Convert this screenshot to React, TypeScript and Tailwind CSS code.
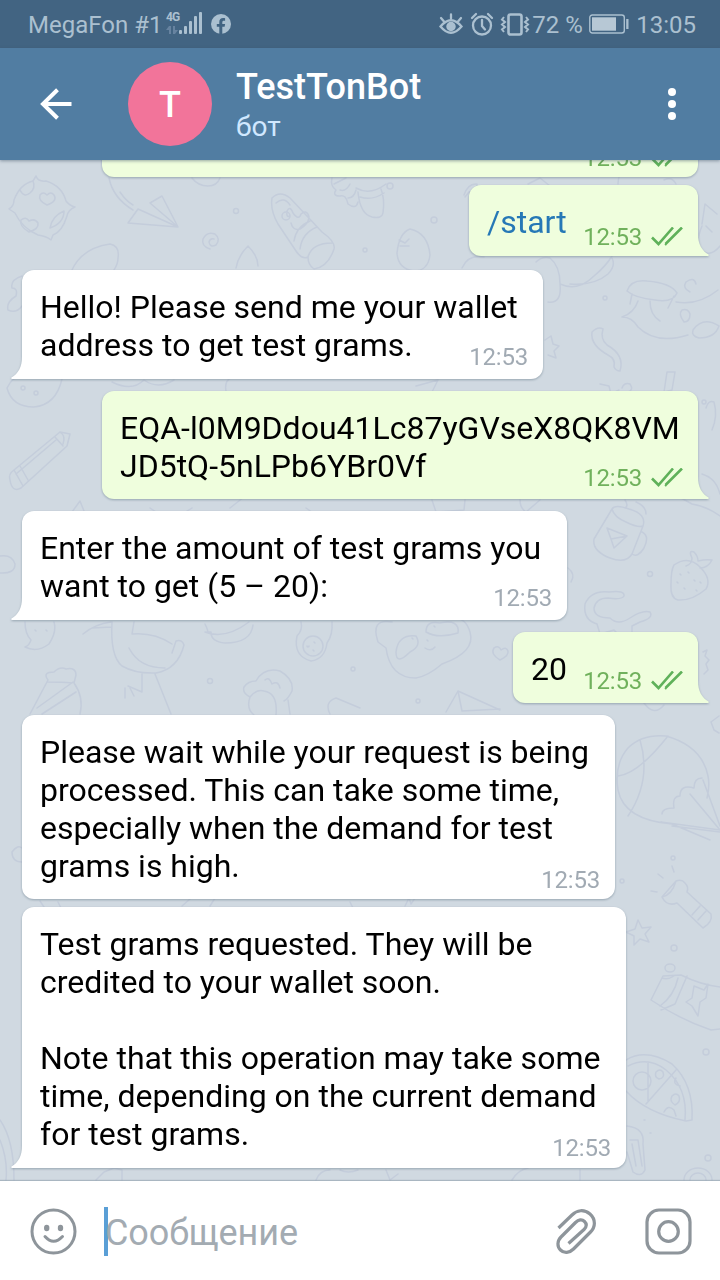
import type { ReactNode } from "react";

interface Message {
  id: string;
  lines: string[];
  time: string;
  out?: boolean;
  command?: boolean;
  tail?: boolean;
  box: string;
  metaOffset?: string;
}

const MESSAGES: Message[] = [
  { id: "start", lines: ["/start"], time: "12:53", out: true, command: true, tail: true, box: "mt-2 w-[229px] h-[71px]", metaOffset: "bottom-[5px]" },
  { id: "hello", lines: ["Hello! Please send me your wallet", "address to get test grams."], time: "12:53", tail: true, box: "mt-[14px] w-[521px] h-[109px]" },
  { id: "wallet", lines: ["EQA-l0M9Ddou41Lc87yGVseX8QK8VM", "JD5tQ-5nLPb6YBr0Vf"], time: "12:53", out: true, tail: true, box: "mt-3 w-[596px] h-[108px]", metaOffset: "bottom-[7px]" },
  { id: "amount", lines: ["Enter the amount of test grams you", "want to get (5 – 20):"], time: "12:53", tail: true, box: "mt-3 w-[545px] h-[109px]" },
  { id: "twenty", lines: ["20"], time: "12:53", out: true, tail: true, box: "mt-3 w-[185px] h-[71px]" },
  {
    id: "wait",
    lines: ["Please wait while your request is being", "processed. This can take some time,", "especially when the demand for test", "grams is high."],
    time: "12:53",
    box: "mt-3 w-[593px] h-[184px]",
    metaOffset: "bottom-[5px]",
  },
  {
    id: "requested",
    lines: [
      "Test grams requested. They will be",
      "credited to your wallet soon.",
      "",
      "Note that this operation may take some",
      "time, depending on the current demand",
      "for test grams.",
    ],
    time: "12:53",
    tail: true,
    box: "mt-2 w-[604px] h-[261px]",
    metaOffset: "bottom-[6px]",
  },
];

// Wallpaper outlines, top to bottom
const DOODLES = [
  // pillow
  "M36 176q2 6 10 5q16 5 20 20q4 5 9 6q-7 3-8 9q-5 16-14 19l-2 5q-5-4-13-5q-16-7-23-22l-6-4q5-3 5-9q6-16 19-19z",
  "M47 205q-9-4-7-10q3-4 7 0q4-4 7 0q4 6-7 10zM29 232q-10-6-8-12q5-4 8 1q6-3 9 2q1 6-9 9zM20 190q4 8 10 3q6-5 3-12M50 228q2-12 14-17q0 12-14 17z",
  // paper plane
  "M128 223l10-14l40 18zM138 209l40 18l-16-31l-12 7l28 24M109 178q4 20 24 32M120 192q6 9 13 13",
  "M192 178q6 8 16 8q9 0 12-8M236 211m-2.500 0a2.500 2.500 0 1 0 5 0a2.500 2.500 0 1 0-5 0",
  // spiral
  "M210 249q-9-3-7-10q4-8 12-5q6 5 1 11q-6 3-7-3q1-4 5-3",
  // feathers behind the greeting
  "M72 270q10-22 38-26q10 2 8 14q0 6-4 12M236 268q2-12 12-22q10 10 10 20M22 276q-12 4-10 12q6 0 4 8q-10 6-8 14q8 4 14-4",
  // sausage
  "M272 198q8-8 18 0l32 34q14 10 12 17q-6 18-20 20q-6-4-6-12q-6 3-12-6l-18-27q-8-14-6-26zM308 257q4-14 24-14M300 249q2-16 17-22M294 241q2-14 16-20M290 216q-4 2-3-5q3-6 6 2q6 8 8 1q6-5 8 3q-1 8-9 12q-7 2-9-6M286 216m-4 0a4 4 0 1 0 8 0a4 4 0 1 0-8 0M276 203q8-7 14 2",
  // cactus pot
  "M358 192q2 22 14 25q10 2 11-4q2-14-2-24M356 188q14 8 30-4M360 197q12 4 24-4M332 178q-2 8 4 12q-4 6 4 6q6-2 8 8q8 6 10-2M334 184q8-4 12-6M340 190q6 2 10-6M348 198q6 0 8-8",
  "M390 186m-3 0a3 3 0 1 0 6 0a3 3 0 1 0-6 0M434 220m-3 0a3 3 0 1 0 6 0a3 3 0 1 0-6 0M365 250m-2 0a2 2 0 1 0 4 0a2 2 0 1 0-4 0",
  // egg
  "M410 229q18 4 20 26q-2 16-16 16q-16-2-17-18q2-20 13-24M399 240l6 3l4-4M400 246l9 0",
  "M464 195q4-12 13-11q1 6-8 8l-4 5M528 184l12-6l10 8M618 184q0-10 6-14M664 180q8-4 12 4",
  // cat
  "M702 224l3-20l12 10M700 250q-4-10 2-24M706 226l6 6M704 252q8 4 16-6",
  // dragon
  "M462 268q6-14 22-11M536 262q6-6 14-4q10 8 10 26q2 20-12 18M560 284q18 8 34-8q12-10 18-20M570 284q24 2 38-10q8-8 4-16",
  // fish and lid
  "M627 291q4-12 20-10q24 2 30 12q-4 10-22 7q-20-2-28-9zM632 294l-2 10M674 296l-6 12M622 317q12-4 16-16M622 317q10 0 16 10q18 18 50 8M650 301q0 14 10 20M676 302q22 4 42-12M684 322q-6-8-2-12q6-2 8 4q0 8-6 8M693 330q10-14 26-4q-4 12-20 12q-8-2-6-8M690 292q-8-4-4-10q8-6 10 2",
  "M605 298m-2 0a2 2 0 1 0 4 0a2 2 0 1 0-4 0M545 340l6-4l2 8l6 2l-5 5l2 7l-8-3",
  // ribbon
  "M592 332q6-6 11-3q-3 10 4 16q18 10 13 26q-4 0-6-4q2-8-6-12q-18-10-16-23z",
  // watermelon
  "M7 388q8-16 20-12q26-4 35 3q-6 26-28 28q-22 0-27-19zM23 388m-2 0a2 2 0 1 0 4 0a2 2 0 1 0-4 0M36 393m-2 0a2 2 0 1 0 4 0a2 2 0 1 0-4 0M112 382q20 10 32-2q14 10 30 0M226 391q-2-10 6-14M416 386l22-6l-6 12",
  "M600 384l9 2l2 8l8-4M664 392l8-2l3-18l-8 0l-3 20M622 388q2-6 8-4q4 6-2 8M706 408q2-8 8-6q4 14-2 28M704 402m-2 0a2 2 0 1 0 4 0a2 2 0 1 0-4 0",
  // pencil
  "M10 480q-2-6 4-10l46-38l10 2l-3 12l-46 42q-9 5-11-8zM14 470l9 16M20 466l8 14M55 437l8 9M16 474l40-34M60 432q6 4 3 12",
  // carrot and cone
  "M72 512l8-11l4 10M150 508q20 16 42 0M230 508l14-11l14 0M306 508l14 10l30-6M432 500l4 12l28-2l1-10M520 500q0 8 6 12l14-12",
  // drum stick
  "M674 494l18 10q14 2 28 12M702 474q14 4 18 20",
  // mug
  "M612 509l-18 30q-2 12 16 19q16 6 22-4l11-28q4-12-14-17q-14-5-17 0zM612 509q2 8 14 13q12 6 17 4M642 532q8 4 2 16q-6 10-12 6M607 528l20 8l-13 12l-3-9zM611 539l16-3M625 500q4 6 0 8M636 502q10 4 10 12",
  // strawberry
  "M674 565q14-10 26 2q12 12 6 22q-14 12-28 11q-8-2-7-16q0-14 3-19zM686 566q6-2 6-8q-4-8 2-6q4 4 4 9q8-2 14-1q-4 8-12 8M680 574l1 1M688 572l1 1M694 580l1 1M684 588l1 1M696 590l1 1M677 582l1 1M700 582l1 1",
  "M650 574m-2.500 0a2.500 2.500 0 1 0 5 0a2.500 2.500 0 1 0-5 0M568 568q8 6 3 14",
  // monkey tail
  "M597 624q-14-4-12-20q6-14 24-12q16-2 15 4q-2 4-16 2q-12 0-14 10q0 10 16 10q8 8 20 0q12-8 20-6q4 6-10 10l-8 4l0 8q-10 6-18-4l-14 4z",
  // goblin and bird
  "M25 622q0 12 6 18q-2 6-6 7q12 6 24-3q8-12 5-22M35 630l1 1M46 630l1 1M0 556q12-2 15 8q0 10-15 9",
  "M83 634q12-10 28-12M92 628l20-1M112 622q-2 34 10 44q14 8 34 7q22-4 28-28q-2-6-8-4l-4 12M134 622l-2 12q22-2 40 10M129 648q10 20 36 20M142 674l0 18l-14-6M155 674l16 40M125 688l0 10M130 688l4 8",
  // burger
  "M205 624q4 8 2 8l4 0q0 10 14 11q26 0 28-18M205 632q20 8 44-10",
  // avocado
  "M301 622q2 8-4 14q-4 20 14 25q14-2 16-18q6-8 5-21M303 646a10 10 0 1 0 20 0a10 10 0 1 0-20 0M307 646a1 1 0 1 0 2 0M314 642l1 1M313 650l1 1",
  "M210 681m-2.500 0a2.500 2.500 0 1 0 5 0a2.500 2.500 0 1 0-5 0M353 669m-2 0a2 2 0 1 0 4 0a2 2 0 1 0-4 0",
  // fries and ice cream
  "M30 714l18-34q-6-8 6-8q6-6 12-3q10-2 10 6l-2 8q10 14 6 31M37 708l36-26M42 714l34-22M48 682q14 0 24 1",
  "M254 715q-8-6-4-18q6-8 14-6q14 2 12 24M250 697q-8-4-6-10q4-6 12-6q8-14 24-10q14 8 12 20q-4 8-8 10M288 700l2 14M265 680q4-4 7 4q6-4 8 4M330 714q-6-12 6-16l24 10",
  // panda
  "M392 622q-22-4-14 20l8 6q4 30 30 30q12-2 26-14q34-12 28-32q-4-14-16-14M396 652q2-18 20-16q6 10-6 16q-14 14-14 0zM426 632q0-12 14-9q20-4 18 10q-20 6-32-1M412 638l1 1M434 626l1 1M427 640l1 1M425 648q6 4 10-1",
  "M500 660q-10-6-6-12q5-3 7 2q5-4 7 1q1 5-8 9zM418 701m-2 0a2 2 0 1 0 4 0a2 2 0 1 0-4 0M446 712l12-21l42 19M458 691l4 20l38-2",
  "M703 652l4-2l-2 6l4 4l-3 4l2 6l-4 4M644 703q10 14 20 2M711 722l8-6M711 722l3 8l5 3",
  // air balloon
  "M618 790q-4-26 10-42q14-14 38-12q36 10 42 40q2 10-1 22M618 776q20-2 50-40M640 740q12 40-12 76M618 790q6 30 54 34l38 16M702 778q-8 0-8 10q-14-4-14 8q-8 0-6 12q-12 0-12 6M661 822l59 8M672 826l48 6M690 794l30 36M703 780l17 46",
  "M673 858m-2 0a2 2 0 1 0 4 0a2 2 0 1 0-4 0M622 881m-2 0a2 2 0 1 0 4 0a2 2 0 1 0-4 0",
  // flashlight
  "M662 897l14-16q6-2 9 2q4 4 2 9l24 22q2 8-8 14l-26-25q-10 4-15-6zM662 897q10-2 14-16M700 906l-8 9M706 911l-8 9M651 891l6 1M658 874l5 4M672 866l2 6",
  // star
  "M638 920l4 8l9-1l-6 7l4 8l-9-3l-6 6l0-9l-8-4l9-3z",
  "M674 948m-3 0a3 3 0 1 0 6 0a3 3 0 1 0-6 0M670 968m-5 0a5 4 0 1 0 10 0a5 4 0 1 0-10 0",
  // snack pack
  "M651 1000l12-24l18-1q20 10 40 12M651 1000q30 20 60 30l9-1M687 976l-12 28l-14 6M662 978q6 2 12-2M678 978q-4 18-18 28M694 986l10 4l4-6l-2 14l-6 4l-2 14l-6-10l-6-4l6-4z",
  // pizza
  "M626 1060q20-12 46 4q22 20 20 56l-6 1q-40-8-60-30M628 1066q20-10 38 4q22 18 19 50M633 1081a9 9 0 1 0 18 0a9 9 0 1 0-18 0M646 1104l30-34M648 1062l0 40M656 1072q4-4 7 0q2 6-4 7q-5-2-3-7M672 1096q4-4 7 0q2 6-4 9q-6-4-3-9M664 1112q4-8 10-2l2 6M676 1078q-4 6 4 8",
  "M706 1052m-3 0a3 3 0 1 0 6 0a3 3 0 1 0-6 0M708 1158m-3 0a3 3 0 1 0 6 0a3 3 0 1 0-6 0M644 1120l1 0M650 1133l1 0",
  "M627 1126q18 2 16 18l2 26q-4 8-12 2l-6-20M630 1140l8 0l4 26M632 1144l4 22M684 1180a14 12 0 0 1 28 0M690 1180a8 7 0 0 1 16 0",
  // slivers between the last bubbles and the input bar
  "M0 1140q8 20 6 40M0 1120q14 20 14 60M96 1180l8-8l10-4l8 2l0 10M316 1180q4-10 14-10M340 1170q8 4 18 0M386 1170l4 10l8-6M512 1180q6-10 16-12M580 1170l0 10",
  "M12 852q6-8 10-4M12 852q0 10 10 10M40 901l4 6M58 902l3 6M182 906l8-7M210 906l5-8M405 906l4-8l2 6l4-6M350 902l3 6",
];

function Wallpaper() {
  return (
    <svg className="absolute inset-0 h-full w-full" viewBox="0 160 720 1021" fill="none" stroke="#c4cddb" strokeWidth="1.5" strokeLinecap="round" strokeLinejoin="round">
      {DOODLES.map((d, i) => (
        <path key={i} d={d} />
      ))}
    </svg>
  );
}

function Checks() {
  return (
    <svg className="h-5 w-8" viewBox="0 0 32 20" fill="none" stroke="#5fb15a" strokeWidth="2.6">
      <path d="M1 10.500l6.500 6.500L22 0.500M14.500 17L31 0.500M14.200 16.600l1.500 1" />
    </svg>
  );
}

function Meta({ time, out, className }: { time: string; out?: boolean; className: string }) {
  return (
    <div className={`absolute right-[15px] flex items-center text-2xl leading-7 ${out ? "gap-[9px] text-[#70b15c]" : "text-[#a1aab3]"} ${className}`}>
      <span className="tracking-[-0.2px]">{time}</span>
      {out && <Checks />}
    </div>
  );
}

function Bubble({ out, tail, box, children }: { out?: boolean; tail?: boolean; box: string; children: ReactNode }) {
  const corner = tail ? (out ? "rounded-br-none" : "rounded-bl-none") : "";
  return (
    <div className={`relative shrink-0 drop-shadow-[0_1px_1px_rgba(100,120,135,0.55)] ${out ? "self-end" : "self-start"} ${box}`}>
      <div className={`h-full rounded-xl px-[18px] pt-[18px] ${out ? "bg-[#effedd]" : "bg-white"} ${corner}`}>{children}</div>
      {tail && (
        <svg
          className={`absolute bottom-0 h-[22px] w-3 ${out ? "left-full -ml-px -scale-x-100" : "right-full -mr-px"}`}
          viewBox="0 0 12 22"
          fill={out ? "#effedd" : "#ffffff"}
        >
          <path d="M12 0h-1C11 10 7 17 0.500 20.500Q-0.200 21.500 1 22H12z" />
        </svg>
      )}
    </div>
  );
}

function StatusBar() {
  return (
    <div className="flex h-12 items-center bg-[#426482] pt-0.5 pr-6 pl-7 text-2xl text-[#abc0d0]">
      <span className="w-[133px] whitespace-nowrap">MegaFon #1</span>
      <div className="-mt-1 ml-[5px] flex w-3 flex-col">
        <span className="h-[11px] text-[12px] leading-[11px] font-bold tracking-[-0.8px]">4G</span>
        <svg className="mt-[3px] h-2 w-3" viewBox="0 0 12 8" fill="#6783a0">
          <path d="M3 0h2v8H3V4L0 4zM7 0h2v4l3 0l-3 4H7z" />
        </svg>
      </div>
      <svg className="-mt-1 h-[22px] w-6" viewBox="0 0 24 22" fill="currentColor">
        <rect x="1" y="18" width="3" height="4" rx="1" />
        <rect x="6" y="14" width="3" height="8" rx="1" />
        <rect x="11" y="9" width="3" height="13" rx="1" />
        <rect x="16" y="4" width="3" height="18" rx="1" />
        <rect x="21" y="0" width="3" height="22" rx="1" />
      </svg>
      <svg className="-mt-0.5 ml-[9px] h-5 w-5" viewBox="0 0 20 20">
        <circle cx="10" cy="10" r="10" fill="#abc0d0" />
        <path d="M8.300 20v-7.200H5.800V9.900h2.500V8c0-2.600 1.500-3.900 3.800-3.900 1 0 2 .2 2 .2v2.400h-1.200c-1.200 0-1.600.7-1.600 1.500v1.700h2.800l-.5 2.900h-2.300V20z" fill="#426482" />
      </svg>
      <div className="ml-auto flex items-center">
        <svg className="-mt-0.5 h-6 w-6" viewBox="0 0 24 24" fill="none" stroke="currentColor" strokeWidth="2.300" strokeLinecap="round">
          <path d="M1.500 14.500Q12 2 22.500 14.500Q12 27 1.500 14.500z" />
          <circle cx="12" cy="14.500" r="3.600" fill="currentColor" />
          <path d="M12 2.500v4M2 6l3 3.500M22 6l-3 3.500" />
        </svg>
        <svg className="-mt-0.5 ml-[7px] h-6 w-6" viewBox="0 0 24 24" fill="none" stroke="currentColor" strokeWidth="2.300" strokeLinecap="round">
          <circle cx="12" cy="13.500" r="9" />
          <path d="M12 8v6l3 3.500M2 6l4-4M22 6l-4-4" />
        </svg>
        <svg className="-mt-0.5 ml-1.5 h-6 w-[30px]" viewBox="0 0 30 24" fill="none" stroke="currentColor" strokeWidth="2">
          <rect x="8.500" y="2.500" width="13" height="20" rx="2" strokeWidth="2.600" />
          <path d="M4 5L2 7.500L5 10L2 12.500L5 15L2 17.500L4 20M26 5l2 2.500L25 10l3 2.500L25 15l3 2.500L26 20" />
        </svg>
        <span className="ml-[2px] w-[49px] whitespace-nowrap">72 %</span>
        <svg className="-mt-0.5 ml-2 h-5 w-10" viewBox="0 0 40 20">
          <rect x="0.800" y="1" width="34.500" height="18" rx="2.500" fill="none" stroke="#abc0d0" strokeWidth="1.400" />
          <rect x="3" y="3.300" width="24" height="13.400" fill="#b7c8d5" />
          <rect x="37.200" y="5" width="2.300" height="10" fill="#abc0d0" />
        </svg>
        <span className="ml-[7px]">13:05</span>
      </div>
    </div>
  );
}

function Header() {
  return (
    <div className="relative z-10 flex h-28 items-center bg-[#517da2] pr-11 pl-10 text-white shadow-[0_1px_3px_rgba(60,80,100,0.5)]">
      <svg className="h-8 w-8" viewBox="0 0 32 32" fill="none" stroke="currentColor" strokeWidth="4">
        <path d="M31.500 16H3M17.500 1.800L3 16l14.500 14.200" />
      </svg>
      <div className="ml-14 flex h-21 w-21 items-center justify-center rounded-full bg-[#f2749a] pt-0.5 text-4xl font-medium">T</div>
      <div className="ml-6 flex flex-col pt-[3px]">
        <span className="text-4xl leading-[42px] font-medium">TestTonBot</span>
        <span className="text-[28px] leading-[38px] text-[#d0e8ff]">бот</span>
      </div>
      <svg className="ml-auto h-8 w-2" viewBox="0 0 8 32" fill="currentColor">
        <circle cx="4" cy="4" r="4" />
        <circle cx="4" cy="16" r="4" />
        <circle cx="4" cy="28" r="4" />
      </svg>
    </div>
  );
}

function Composer() {
  return (
    <div className="relative flex h-[99px] shrink-0 items-center bg-white pr-7 pl-[30px] shadow-[0_-1px_1px_rgba(110,130,145,0.4)]">
      <svg className="mt-[3px] h-12 w-12" viewBox="0 0 48 48" fill="none" stroke="#8e959b" strokeWidth="3" strokeLinecap="round">
        <circle cx="23.500" cy="23.500" r="21.500" />
        <ellipse cx="16.700" cy="20" rx="2.700" ry="3.300" fill="#8e959b" stroke="none" />
        <ellipse cx="30.500" cy="20" rx="2.700" ry="3.300" fill="#8e959b" stroke="none" />
        <path d="M15 28.500q8.500 9.500 17.500 0" />
      </svg>
      <div className="ml-[26px] flex items-center">
        <div className="mt-[2px] h-[49px] w-1 bg-[#5a9fd6]" />
        <span className="-ml-[3px] pt-[5px] text-4xl tracking-[-0.1px] text-[#a3abb2]">Сообщение</span>
      </div>
      <svg className="mt-[3px] ml-auto h-12 w-12" viewBox="552 1208 48 48" fill="none" stroke="#8e959b" strokeWidth="3.200">
        <path d="M558.500 1228L572 1215C577 1210 584 1209 590 1214C596 1219.500 595.500 1227 590.500 1232L573.500 1249C569.500 1253 564 1253.500 560.500 1250C557 1246.500 557 1241 561 1237L575.500 1222.500C578.500 1219.500 582 1219 584.500 1221.500C587 1224 586.500 1227 584 1229.500L568.500 1243.500" />
      </svg>
      <svg className="mt-[3px] ml-[44px] h-12 w-12" viewBox="0 0 48 48" fill="none" stroke="#8e959b" strokeWidth="3.200">
        <rect x="3" y="2" width="43" height="43" rx="12" />
        <circle cx="24.500" cy="23.500" r="9.800" />
      </svg>
    </div>
  );
}

export default function App() {
  return (
    <div className="flex h-[1280px] w-[720px] flex-col overflow-hidden bg-[#d0d9e1] font-['Roboto',sans-serif]">
      <StatusBar />
      <Header />
      <div className="relative flex flex-1 flex-col overflow-hidden pr-[22px] pl-[22px]">
        <Wallpaper />
        {/* Message scrolled under the header */}
        <Bubble out box="-mt-[54px] w-[596px] h-[71px]">
          <Meta time="12:53" out className="bottom-[5px]" />
        </Bubble>
        {MESSAGES.map((msg) => (
          <Bubble key={msg.id} out={msg.out} tail={msg.tail} box={msg.box}>
            <div className={`text-[32px] leading-[38px] whitespace-pre ${msg.command ? "text-[#2678b6]" : "text-black"}`}>
              {msg.lines.map((line, i) => (
                <p key={i} className="h-[38px]">
                  {line}
                </p>
              ))}
            </div>
            <Meta time={msg.time} out={msg.out} className={msg.metaOffset ?? "bottom-[8px]"} />
          </Bubble>
        ))}
      </div>
      <Composer />
    </div>
  );
}
